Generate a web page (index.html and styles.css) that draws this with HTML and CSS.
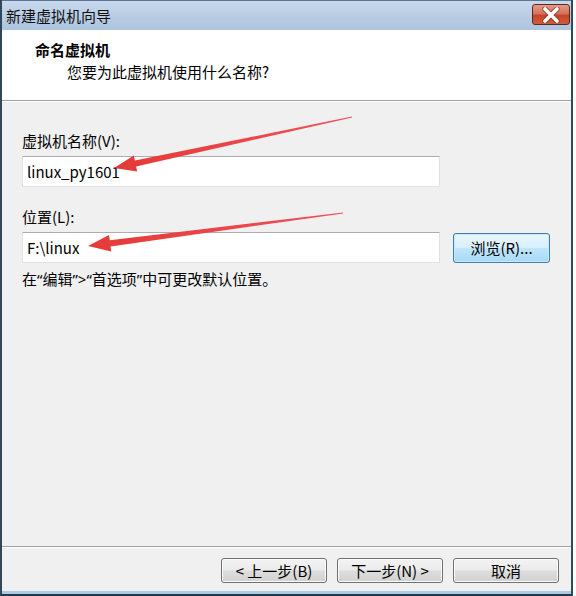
FILE: index.html
```html
<!DOCTYPE html>
<html lang="zh-CN">
<head>
<meta charset="utf-8">
<title>新建虚拟机向导</title>
<link rel="stylesheet" href="styles.css">
</head>
<body>
<div class="window">
  <div class="titlebar">
    <span class="title">新建虚拟机向导</span>
    <div class="close">
      <svg width="20" height="16" viewBox="0 0 20 16">
        <path d="M4 2 L16 14 M16 2 L4 14" stroke="#5a2418" stroke-width="5.5" stroke-linecap="round" opacity="0.55"/>
        <path d="M4 2 L16 14 M16 2 L4 14" stroke="#ffffff" stroke-width="3.6" stroke-linecap="round"/>
      </svg>
    </div>
  </div>
  <div class="header">
    <div class="h-title">命名虚拟机</div>
    <div class="h-sub">您要为此虚拟机使用什么名称?</div>
  </div>
  <div class="content">
    <div class="label">虚拟机名称(V):</div>
    <div class="field-row">
      <div class="input">linux_py1601</div>
    </div>
    <div class="label label-2">位置(L):</div>
    <div class="field-row">
      <div class="input">F:\linux</div>
      <button class="btn btn-browse">浏览(R)...</button>
    </div>
    <div class="note">在<span class="q">“</span>编辑<span class="q">”&gt;“</span>首选项<span class="q">”</span>中可更改默认位置。</div>
  </div>
  <div class="footer">
    <button class="btn">&lt; 上一步(B)</button>
    <button class="btn">下一步(N) &gt;</button>
    <button class="btn">取消</button>
  </div>
</div>
<svg class="arrows" width="576" height="596" viewBox="0 0 576 596">
  <defs>
    <linearGradient id="ag" x1="0" y1="0" x2="1" y2="0">
      <stop offset="0" stop-color="#e53a36"/>
      <stop offset="1" stop-color="#f0505a"/>
    </linearGradient>
  </defs>
  <polygon fill="url(#ag)" points="114,168 137.2,171.6 136.1,166.6 352.1,117.5 351.9,116.5 134.9,160.6 133.8,155.4"/>
  <polygon fill="url(#ag)" points="88,246 111.2,251.4 110.6,246.4 343.1,213.5 342.9,212.5 109.8,240.2 109.0,235.0"/>
</svg>
</body>
</html>
```
FILE: styles.css
```css
html, body {
  margin: 0;
  padding: 0;
  background: #ffffff;
}
body {
  position: relative;
  width: 576px;
  height: 596px;
  overflow: hidden;
  font-family: "Noto Sans CJK SC", "Noto Sans", sans-serif;
  font-size: 15px;
  color: #000;
}
.window {
  box-sizing: border-box;
  width: 573px;
  height: 596px;
  display: flex;
  flex-direction: column;
  border-left: 2px solid #33475a;
  border-right: 2px solid #2c4d58;
  border-bottom: 2px solid #23394a;
  background: #f0f0f0;
}
.titlebar {
  height: 30px;
  flex: none;
  display: flex;
  align-items: center;
  padding-left: 4px;
  padding-right: 1px;
  background: linear-gradient(#c8d9ed, #b6cbe3 60%, #afc5df);
  border-top: 1px solid #5d7590;
  box-sizing: border-box;
}
.title {
  font-size: 15px;
  line-height: 20px;
  color: #111;
}
.close {
  margin-left: auto;
  width: 38px;
  height: 21px;
  box-sizing: border-box;
  border: 1px solid #5b2a22;
  border-radius: 3px;
  background: linear-gradient(#e59b87 0%, #d7735b 45%, #c4462b 55%, #d05c3c 100%);
  display: flex;
  align-items: center;
  justify-content: center;
  margin-top: -2px;
}
.header {
  height: 71px;
  flex: none;
  box-sizing: border-box;
  background: #ffffff;
  border-bottom: 1px solid #a0a0a0;
  padding: 10px 0 0 33px;
}
.h-title {
  font-weight: bold;
  line-height: 20px;
}
.h-sub {
  line-height: 20px;
  margin-top: 2px;
  padding-left: 32px;
}
.content {
  flex: 1;
  border-top: 1px solid #ffffff;
  padding: 29px 0 0 20px;
}
.label {
  line-height: 20px;
  margin-bottom: 5px;
}
.label-2 {
  margin-top: 20px;
}
.field-row {
  display: flex;
  align-items: center;
  gap: 13px;
}
.input {
  box-sizing: border-box;
  width: 418px;
  height: 31px;
  background: #ffffff;
  border: 1px solid #dfe3e8;
  border-top-color: #abadb3;
  padding-left: 4px;
  line-height: 29px;
}
.note {
  margin-top: 6px;
  line-height: 20px;
}
.q {
  font-family: "Noto Sans", "Liberation Sans", sans-serif;
}
.btn {
  box-sizing: border-box;
  width: 106px;
  height: 25px;
  font-family: inherit;
  font-size: 15px;
  line-height: 21px;
  padding: 0;
  color: #000;
  border: 1px solid #707070;
  border-radius: 3px;
  background: linear-gradient(#f3f3f3 0%, #ebebeb 48%, #dddddd 52%, #d2d2d2 100%);
  box-shadow: inset 0 0 0 1px #fcfcfc;
}
.btn-browse {
  width: 97px;
  height: 30px;
  border-color: #3c7fb1;
  background: linear-gradient(#eaf6fd 0%, #d9f0fc 48%, #bee6fd 52%, #a7d9f5 100%);
  box-shadow: inset 0 0 0 1px #c8e9f8;
}
.footer {
  height: 48px;
  flex: none;
  box-sizing: border-box;
  border-top: 1px solid #a0a0a0;
  border-bottom: 3px solid #a9cbe4;
  display: flex;
  justify-content: flex-end;
  gap: 10px;
  padding: 11px 12px 0 0;
  box-shadow: inset 0 1px 0 #ffffff;
}
.arrows {
  position: absolute;
  top: 0;
  left: 0;
  pointer-events: none;
}
```
